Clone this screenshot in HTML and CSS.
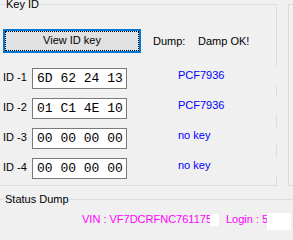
FILE: index.html
```html
<!DOCTYPE html>
<html>
<head>
<meta charset="utf-8">
<link rel="stylesheet" href="styles.css">
</head>
<body>
<div class="screen">
  <div class="top">
    <div class="group keyid">
      <span class="legend legend-key">Key ID</span>
      <div class="btnrow">
        <div class="btn"><div class="focus">View ID key</div></div>
        <span class="dump">Dump:</span>
        <span class="dumpval">Damp OK!</span>
      </div>
      <div class="rows">
        <div class="row">
          <span class="idlabel">ID -1</span>
          <div class="keybox">6D 62 24 13</div>
          <span class="chip">PCF7936</span>
        </div>
        <div class="row">
          <span class="idlabel">ID -2</span>
          <div class="keybox">01 C1 4E 10</div>
          <span class="chip">PCF7936</span>
        </div>
        <div class="row">
          <span class="idlabel">ID -3</span>
          <div class="keybox">00 00 00 00</div>
          <span class="chip">no key</span>
        </div>
        <div class="row">
          <span class="idlabel">ID -4</span>
          <div class="keybox">00 00 00 00</div>
          <span class="chip">no key</span>
        </div>
      </div>
    </div>
    <div class="group side"></div>
  </div>
  <div class="group status">
    <span class="legend legend-status">Status Dump</span>
    <div class="vinrow">
      <span class="vin">VIN : VF7DCRFNC761175</span>
      <span class="redact redact1"></span>
      <span class="login">Login : 5</span>
      <span class="redact redact2"></span>
    </div>
  </div>
</div>
</body>
</html>
```
FILE: styles.css
```css
body {
  margin: 0;
  background: #f0f0f0;
  font-family: "Liberation Sans", Arial, sans-serif;
  font-size: 11px;
  line-height: 13px;
  color: #000;
}
.screen {
  width: 293px;
  height: 240px;
  overflow: hidden;
  position: relative;
}
.top {
  display: flex;
  align-items: flex-start;
  padding-top: 4px;
}
.group {
  border: 1px solid #dcdcdc;
  position: relative;
  box-sizing: border-box;
}
.keyid {
  flex-shrink: 0;
  margin-left: -10px;
  width: 287px;
  height: 182px;
  padding: 0 0 0 12px;
}
.side {
  flex-shrink: 0;
  margin-left: 11px;
  width: 30px;
  height: 182px;
}
.legend {
  position: absolute;
  top: -7px;
  padding: 0 1px;
  background: #f0f0f0;
  white-space: nowrap;
}
.legend-key { left: 14px; }
.legend-status { left: 13px; }
.btnrow {
  display: flex;
  align-items: center;
  margin-top: 24px;
}
.btn {
  flex-shrink: 0;
  width: 138px;
  height: 24px;
  box-sizing: border-box;
  border: 2px solid #0078d7;
  background: #e1e1e1;
  display: flex;
}
.focus {
  flex: 1;
  border: 1px dotted #000;
  display: flex;
  align-items: center;
  justify-content: center;
  padding-bottom: 2px;
}
.dump {
  flex-shrink: 0;
  margin-left: 12px;
  width: 45px;
}
.dumpval { white-space: nowrap; }
.rows {
  display: flex;
  flex-direction: column;
  gap: 9px;
  margin-top: 15px;
}
.row {
  display: flex;
  align-items: flex-start;
}
.idlabel {
  flex-shrink: 0;
  width: 29px;
  padding-top: 3px;
  white-space: nowrap;
}
.keybox {
  flex-shrink: 0;
  width: 95px;
  height: 21px;
  box-sizing: border-box;
  border: 1px solid #7a7a7a;
  background: #fff;
  font-family: "Liberation Mono", "Courier New", monospace;
  font-size: 13px;
  line-height: 19px;
  padding-left: 4px;
  white-space: pre;
}
.chip {
  flex-shrink: 0;
  margin-left: 51px;
  margin-top: -1px;
  width: 102px;
  height: 18px;
  padding-top: 2px;
  box-sizing: border-box;
  background: #f0f0f0;
  color: #0000ff;
  position: relative;
}
.status {
  margin-left: -10px;
  margin-top: 13px;
  width: 313px;
  height: 60px;
  padding: 13px 0 0 91px;
}
.vinrow {
  display: flex;
  align-items: flex-start;
  color: #ff00ff;
}
.vin {
  flex-shrink: 0;
  width: 128px;
  white-space: nowrap;
}
.redact {
  flex-shrink: 0;
  background: #fff;
}
.redact1 {
  width: 9px;
  height: 12px;
  margin-top: 1px;
}
.login {
  flex-shrink: 0;
  margin-left: 7px;
  width: 41px;
  white-space: nowrap;
}
.redact2 {
  width: 24px;
  height: 17px;
}
```
